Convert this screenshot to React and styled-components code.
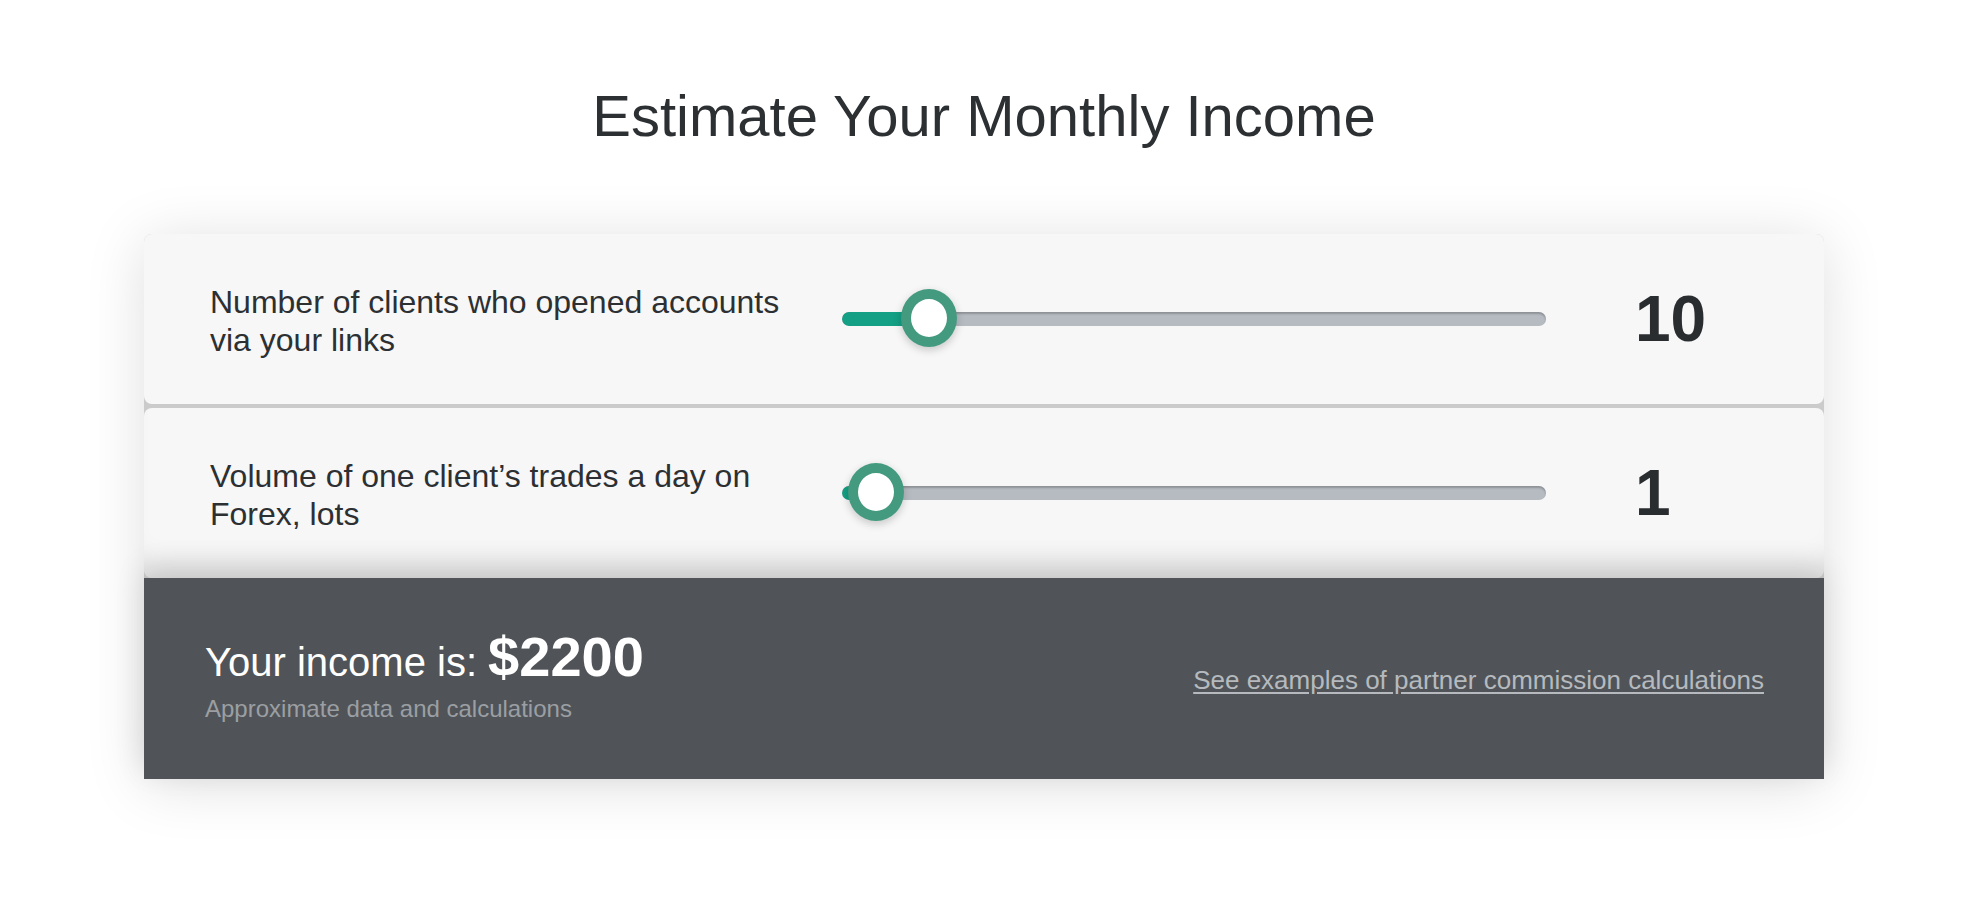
import React from "react";
import styled, { createGlobalStyle } from "styled-components";

const GlobalStyle = createGlobalStyle`
  html, body {
    margin: 0;
    padding: 0;
    background: #ffffff;
    font-family: "Liberation Sans", Arial, Helvetica, sans-serif;
  }
  * { box-sizing: border-box; }
`;

const Page = styled.main`
  padding: 81px 0 80px;
  display: flex;
  flex-direction: column;
  align-items: center;
`;

const Title = styled.h1`
  margin: 0 0 83px;
  font-size: 58px;
  line-height: 1.2;
  font-weight: 400;
  color: #2d3033;
  text-align: center;
`;

const Card = styled.section`
  width: 1680px;
  box-shadow: 0 6px 60px rgba(0, 0, 0, 0.13);
  border-radius: 8px 8px 0 0;
`;

const Panels = styled.div`
  display: flex;
  flex-direction: column;
  gap: 4px;
  background: #cbcbcb;
  border-radius: 8px 8px 0 0;
`;

const Panel = styled.div`
  height: 170px;
  background: #f7f7f7;
  border-radius: 8px;
  display: grid;
  grid-template-columns: 600px 704px auto;
  column-gap: 32px;
  align-items: center;
  padding: 0 66px;
  box-shadow: ${(p) => (p.$shaded ? "inset 0 -34px 30px -22px rgba(0, 0, 0, 0.1)" : "none")};
`;

const Label = styled.div`
  padding-top: 5px;
  font-size: 32px;
  line-height: 38px;
  color: #2d3033;
`;

const SliderBox = styled.div`
  position: relative;
  height: 58px;
  display: flex;
  align-items: center;
`;

const Track = styled.div`
  position: relative;
  width: 100%;
  height: 14px;
  border-radius: 7px;
  background: #b6bbc2;
  box-shadow: inset 0 2px 2px rgba(0, 0, 0, 0.22);
  overflow: hidden;
`;

const Fill = styled.div`
  position: absolute;
  left: 0;
  top: 0;
  bottom: 0;
  border-radius: 7px 0 0 7px;
  background: #14a084;
`;

const Thumb = styled.div`
  position: absolute;
  top: -1px;
  width: 56px;
  height: 58px;
  margin-left: -28px;
  border-radius: 50%;
  background: #ffffff;
  border: 10px solid #449a7f;
  box-shadow: 0 3px 8px rgba(0, 0, 0, 0.2);
`;

const Value = styled.div`
  padding-left: 57px;
  font-size: 64px;
  font-weight: 700;
  color: #2a2d30;
  line-height: 1;
`;

const Footer = styled.div`
  position: relative;
  z-index: 1;
  height: 201px;
  background: #505458;
  box-shadow: 0 -10px 28px rgba(0, 0, 0, 0.12);
  display: flex;
  align-items: center;
  justify-content: space-between;
  padding: 0 60px 6px 61px;
`;

const IncomeBlock = styled.div`
  display: flex;
  flex-direction: column;
  gap: 8px;
`;

const IncomeLine = styled.div`
  color: #ffffff;
  font-size: 40px;
  line-height: 1.1;
`;

const Amount = styled.strong`
  font-size: 56px;
  font-weight: 700;
`;

const Note = styled.div`
  color: #9b9fa3;
  font-size: 24px;
  line-height: 1.2;
`;

const Link = styled.a`
  color: #b6babe;
  font-size: 26px;
  text-decoration: underline;
  text-underline-offset: 3px;
  margin-top: 10px;
  cursor: pointer;
`;

function Slider({ pct }) {
  const thumbLeft = `calc(28px + (100% - 56px) * ${pct})`;
  return (
    <SliderBox>
      <Track>
        <Fill style={{ width: thumbLeft }} />
      </Track>
      <Thumb style={{ left: thumbLeft }} />
    </SliderBox>
  );
}

const rows = [
  { label: "Number of clients who opened accounts via your links", value: "10", pct: 9 / 99 },
  { label: "Volume of one client\u2019s trades a day on Forex, lots", value: "1", pct: 0.9 / 99.9 },
];

export default function App() {
  return (
    <>
      <GlobalStyle />
      <Page>
        <Title>Estimate Your Monthly Income</Title>
        <Card>
          <Panels>
            {rows.map((r, i) => (
              <Panel key={r.value} $shaded={i === rows.length - 1}>
                <Label>{r.label}</Label>
                <Slider pct={r.pct} />
                <Value>{r.value}</Value>
              </Panel>
            ))}
          </Panels>
          <Footer>
            <IncomeBlock>
              <IncomeLine>
                Your income is: <Amount>$2200</Amount>
              </IncomeLine>
              <Note>Approximate data and calculations</Note>
            </IncomeBlock>
            <Link>See examples of partner commission calculations</Link>
          </Footer>
        </Card>
      </Page>
    </>
  );
}
